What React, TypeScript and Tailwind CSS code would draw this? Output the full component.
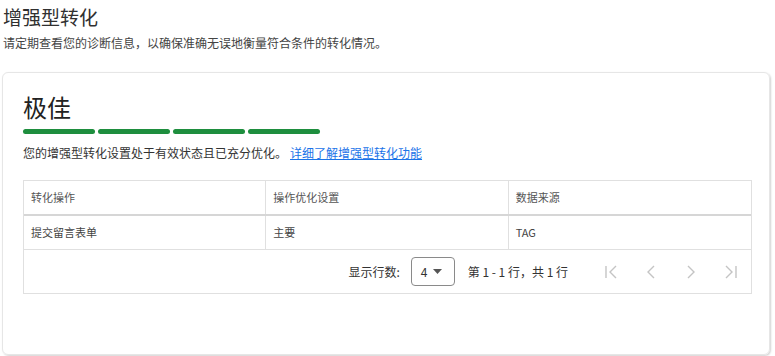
import { type FunctionComponent } from "react";

const FONT = { fontFamily: '"Noto Sans CJK SC", "Noto Sans", Roboto, sans-serif' };

const COLUMNS = ["转化操作", "操作优化设置", "数据来源"];
const ROWS = [["提交留言表单", "主要", "TAG"]];

function PagerIcon({ kind }: { kind: "first" | "prev" | "next" | "last" }) {
  return (
    <svg width="20" height="20" viewBox="0 0 20 20" fill="none" stroke="#c4c4c4" strokeWidth="1.4">
      {kind === "first" && (
        <>
          <path d="M5 4v12" />
          <path d="M15 4l-6 6 6 6" />
        </>
      )}
      {kind === "prev" && <path d="M13 4l-6 6 6 6" />}
      {kind === "next" && <path d="M7 4l6 6-6 6" />}
      {kind === "last" && (
        <>
          <path d="M5 4l6 6-6 6" />
          <path d="M15 4v12" />
        </>
      )}
    </svg>
  );
}

const App: FunctionComponent = () => {
  return (
    <div className="w-[775px] h-[356px] bg-white overflow-hidden" style={FONT}>
      <div className="px-[3px] pt-[4px]">
        <h1 className="text-[19px] leading-[26px] text-[#303030]">增强型转化</h1>
        <p className="mt-[5px] text-[12px] leading-[16px] text-[#444]">
          请定期查看您的诊断信息，以确保准确无误地衡量符合条件的转化情况。
        </p>
      </div>

      <div className="mt-[21px] ml-[2px] mr-[5px] h-[283px] rounded-[6px] border border-[#e6e6e6] shadow-[1px_1px_2px_rgba(0,0,0,0.18)] px-[20px] pt-[18px]">
        <div className="text-[24px] leading-[32px] text-[#222]">极佳</div>
        <div className="mt-[6px] flex gap-[3px]">
          {[0, 1, 2, 3].map((i) => (
            <div key={i} className="w-[72px] h-[5px] rounded-full bg-[#1e8e3e]" />
          ))}
        </div>
        <p className="mt-[11px] text-[12px] leading-[16px] text-[#333]">
          您的增强型转化设置处于有效状态且已充分优化。
          <a href="#" className="ml-[3px] text-[#1a73e8] underline">
            详细了解增强型转化功能
          </a>
        </p>

        <div className="mt-[19px] w-[729px] border border-[#e0e0e0] text-[11px] text-[#555]">
          <div className="grid grid-cols-3 h-[35px] border-b-2 border-[#d6d6d6]">
            {COLUMNS.map((c, i) => (
              <div
                key={c}
                className={`flex items-center pl-[7px] ${i < 2 ? "border-r border-[#e0e0e0]" : ""}`}
              >
                {c}
              </div>
            ))}
          </div>
          {ROWS.map((r) => (
            <div key={r[0]} className="grid grid-cols-3 h-[34px] border-b border-[#e0e0e0]">
              {r.map((c, i) => (
                <div
                  key={i}
                  className={`flex items-center pl-[7px] text-[#444] ${i < 2 ? "border-r border-[#e0e0e0]" : ""}`}
                >
                  {c}
                </div>
              ))}
            </div>
          ))}
          <div className="h-[43px] flex items-center justify-end pr-[10px] text-[12px] text-[#333]">
            <span>显示行数:</span>
            <div className="ml-[11px] w-[44px] h-[29px] rounded-[4px] border border-[#8a8a8a] flex items-center pl-[9px] gap-[6px]">
              <span>4</span>
              <svg width="9" height="5" viewBox="0 0 9 5">
                <path d="M0 0h9L4.5 5z" fill="#555" />
              </svg>
            </div>
            <span className="ml-[13px] mr-[33px]">第 1 - 1 行，共 1 行</span>
            <div className="flex gap-[20px]">
              <PagerIcon kind="first" />
              <PagerIcon kind="prev" />
              <PagerIcon kind="next" />
              <PagerIcon kind="last" />
            </div>
          </div>
        </div>
      </div>
    </div>
  );
};

export default App;
